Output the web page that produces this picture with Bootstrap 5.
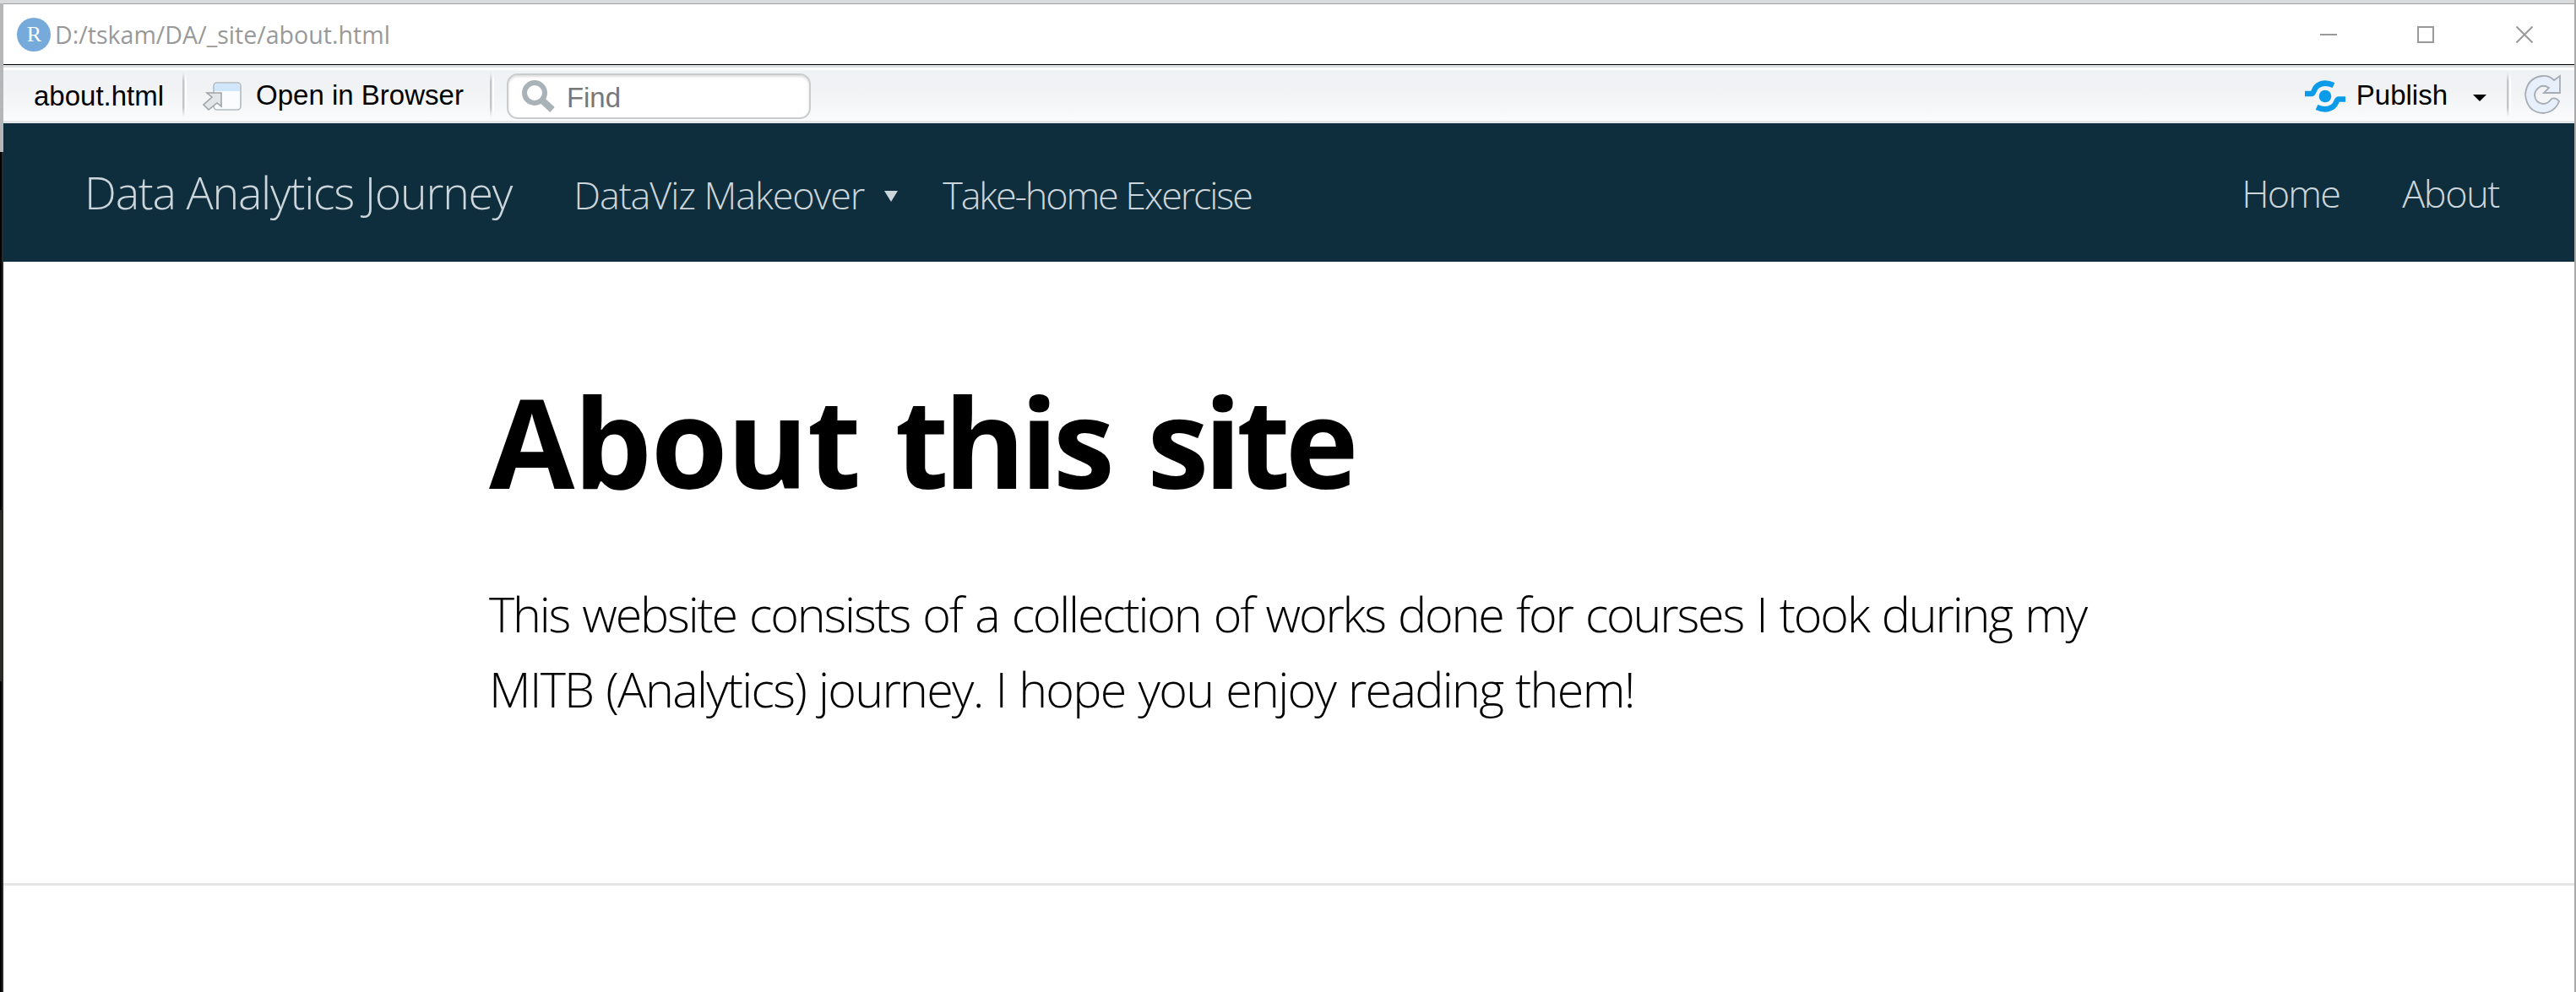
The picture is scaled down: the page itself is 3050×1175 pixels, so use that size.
<!DOCTYPE html>
<html lang="en">
<head>
<meta charset="utf-8">
<title>D:/tskam/DA/_site/about.html</title>
<link href="https://cdn.jsdelivr.net/npm/bootstrap@5.3.0/dist/css/bootstrap.min.css" rel="stylesheet">
<style>
body{height:1175px;overflow:hidden;padding:4px 2px 0 4px;font-family:"Open Sans","Noto Sans",sans-serif;
background:linear-gradient(#a9a9a9,#a9a9a9) right/2px 100% no-repeat,
linear-gradient(#d9dadb,#d9dadb) top/100% 4px no-repeat,
linear-gradient(#b5b6b7 0 180px,transparent 180px) left/4px 100% no-repeat,
linear-gradient(#2d2926,#2d2926) 2px 0/2px 100% no-repeat,
linear-gradient(#000 0 604px,#292927 604px 807px,#000 807px) left/2px 100% no-repeat,#fff;}
.win{height:1171px;background:#fff;border-top:1px solid #a0a0a0}
.titlebar{height:71px;padding:0 49px 0 16px;color:#999;font-size:28.5px;white-space:nowrap}
.titlebar .path-text{margin-left:5px;padding-top:1px;letter-spacing:.04px}
.tools{height:70px;border-top:1px solid #000;border-bottom:3px solid #e4e7ea;
background:linear-gradient(#dfe0e2 0 3px,#fff 3px 5px,#eff2f4 7px,#f1f3f5 50%,#fbfbfc);padding:3px 15px 0 36px;
font:33px/40px "Liberation Sans",Arial,sans-serif;color:#000;white-space:nowrap}
.vsep{width:5px;height:52px;background:linear-gradient(90deg,#c3c6c8 0 2px,#fff 3px 5px);-webkit-mask:linear-gradient(transparent,#000 20%,#000 80%,transparent)}
.find{width:360px;height:54px;border:2px solid #c9cccd;border-radius:13px;background:#fff;box-shadow:inset 0 2px 3px #ddd;padding-left:16px;color:#777}
.topnav{height:164px;background:#0f2e3d;padding:0 89px 0 96px;font-weight:300;font-size:45px;color:#cbd5da;white-space:nowrap}
.topnav a{color:inherit;text-decoration:none;line-height:60px}
.brandname{font-size:53.6px;letter-spacing:-1.2px}
.headline{font-size:147px;line-height:160px;font-weight:700;color:#000;margin:132px 0 81px;white-space:nowrap}
.w1{letter-spacing:-1.3px}.w2{letter-spacing:-6px}
.w1+.w2{margin-left:3px}.w2+.w2{margin-left:6px}
.article{margin-left:575px}
.intro{font-size:57.5px;line-height:89px;font-weight:300;color:#000;white-space:nowrap;margin:0 0 185px}
.l1{letter-spacing:-2.2px;word-spacing:2.5px}.l2{letter-spacing:-1.73px;word-spacing:1.6px}
.rule{height:3px;background:#e5e5e5}
svg{display:block;flex:none}
</style>
<script src="https://cdn.jsdelivr.net/npm/bootstrap@5.3.0/dist/js/bootstrap.bundle.min.js"></script>
</head>
<body>
<div class="win">
 <div class="titlebar d-flex align-items-center">
  <svg width="40" height="40"><circle cx="20" cy="20" r="20" fill="#75aadb"/><text x="20.5" y="28" text-anchor="middle" font-family="Liberation Serif,serif" font-size="26" fill="#fff">R</text></svg>
  <span class="path-text">D:/tskam/DA/_site/about.html</span>
  <svg class="ms-auto" width="252" height="24" fill="none" stroke="#999" stroke-width="2"><path d="M0 12h20M116 3h18v18h-18zM232.500 2.500l19 19m0-19l-19 19"/></svg>
 </div>
 <div class="tools d-flex align-items-center">
  <span style="padding-top:4px">about.html</span>
  <div class="vsep" style="margin-left:22px"></div>
  <svg width="46" height="36" style="margin:4px 0 0 19px">
   <rect x="13" y="2" width="32" height="32" rx="4" fill="#fafcfe" stroke="#b0bac1" stroke-width="1.600"/>
   <path d="M14 12V7q0-4 4-4h22q4 0 4 4v5z" fill="#cfe6fb"/>
   <path d="M5 14H22V30L17 26L7 34L1 28L11 19Z" fill="#e3e6e8" stroke="#9ea4a8" stroke-width="1.600"/>
  </svg>
  <span style="margin-left:17px;padding-top:3px">Open in Browser</span>
  <div class="vsep" style="margin-left:31px"></div>
  <div class="find d-flex align-items-center" style="margin:4px 0 0 15px">
   <svg width="40" height="40" fill="none" stroke="#a9b2b6"><circle cx="15" cy="16" r="12" stroke-width="6"/><path d="M23.500 24.500L36 36" stroke-width="8"/></svg>
   <span style="margin-left:13px;padding-top:4px">Find</span>
  </div>
  <svg class="ms-auto" width="50" height="40" style="margin-top:4px" fill="none" stroke="#0c9be8"><circle cx="25" cy="20" r="7.300" fill="#0c9be8" stroke="none"/>
   <path d="M1 17H9C12 17 11 11 16 7.500Q24 2 35 7" stroke-width="6.500"/><path d="M49 23.500H41C38 23.500 39 29 34 32.500Q26 38 15 33" stroke-width="6.500"/></svg>
  <span style="margin-left:12px;padding-top:3px">Publish</span>
  <svg width="16" height="8" style="margin:9px 0 0 30px"><path d="M0 0h16l-8 8z"/></svg>
  <div class="vsep" style="margin-left:24px"></div>
  <svg width="44" height="48" style="margin-left:16px"><path d="M35 7L42 2V22H23L29 16Q23 12 18 15Q12 19 12 25Q13 34 22 35Q28 35 32 29Q37 27 41 32Q36 45 22 46Q3 45 1 24Q3 4 21 2Q29 1 35 7Z" fill="#e7effa" stroke="#a5acb5" stroke-width="1.800"/></svg>
 </div>
 <nav class="topnav d-flex align-items-center">
  <a href="#" class="brandname">Data Analytics Journey</a>
  <a href="#" style="margin-left:73px;padding-top:6px;letter-spacing:-1.1px">DataViz Makeover</a>
  <svg width="16" height="13" style="margin:9px 0 0 24px"><path d="M0 0h16l-8 13z" fill="#cbd5da"/></svg>
  <a href="#" style="margin-left:53px;padding-top:6px;letter-spacing:-2.15px">Take-home Exercise</a>
  <a href="#" class="ms-auto" style="letter-spacing:-1.8px;padding-top:1px">Home</a>
  <a href="#" style="margin-left:74px;letter-spacing:-1.4px;padding-top:1px">About</a>
 </nav>
 <main>
  <div class="article">
   <h1 class="headline"><span class="w1">About</span> <span class="w2">this</span> <span class="w2">site</span></h1>
   <p class="intro"><span class="l1">This website consists of a collection of works done for courses I took during my</span><br><span class="l2">MITB (Analytics) journey. I hope you enjoy reading them!</span></p>
  </div>
  <div class="rule"></div>
 </main>
</div>
</body>
</html>
